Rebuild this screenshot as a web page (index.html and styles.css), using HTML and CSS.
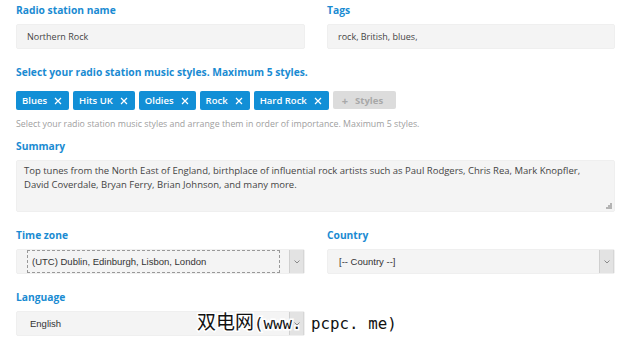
FILE: index.html
```html
<!DOCTYPE html>
<html lang="en">
<head>
    <meta charset="UTF-8">
    <meta name="viewport" content="width=device-width, initial-scale=1.0">
    <title>Radio station details</title>
    <link rel="stylesheet" href="styles.css">
</head>
<body>
    <form class="station-form" id="station-form">
        <div class="form-row">
            <div class="form-group">
                <label for="station-name">Radio station name</label>
                <input type="text" id="station-name" class="text-input" value="Northern Rock">
            </div>
            <div class="form-group">
                <label for="station-tags">Tags</label>
                <input type="text" id="station-tags" class="text-input" value="rock, British, blues,">
            </div>
        </div>

        <div class="form-group form-group-help">
            <label>Select your radio station music styles. Maximum 5 styles.</label>
            <div class="chips">
                <span class="chip">Blues <svg class="chip-x" viewBox="0 0 8 8"><path d="M1 1L7 7M7 1L1 7"/></svg></span>
                <span class="chip">Hits UK <svg class="chip-x" viewBox="0 0 8 8"><path d="M1 1L7 7M7 1L1 7"/></svg></span>
                <span class="chip">Oldies <svg class="chip-x" viewBox="0 0 8 8"><path d="M1 1L7 7M7 1L1 7"/></svg></span>
                <span class="chip">Rock <svg class="chip-x" viewBox="0 0 8 8"><path d="M1 1L7 7M7 1L1 7"/></svg></span>
                <span class="chip">Hard Rock <svg class="chip-x" viewBox="0 0 8 8"><path d="M1 1L7 7M7 1L1 7"/></svg></span>
                <button type="button" class="add-style" disabled><span class="plus">+</span>Styles</button>
            </div>
            <p class="help">Select your radio station music styles and arrange them in order of importance. Maximum 5 styles.</p>
        </div>

        <div class="form-group">
            <label for="station-summary">Summary</label>
            <div class="area-wrap">
                <textarea id="station-summary" class="text-area">Top tunes from the North East of England, birthplace of influential rock artists such as Paul Rodgers, Chris Rea, Mark Knopfler, David Coverdale, Bryan Ferry, Brian Johnson, and many more.</textarea>
                <span class="grip"></span>
            </div>
        </div>

        <div class="form-row">
            <div class="form-group">
                <label>Time zone</label>
                <div class="select">
                    <span class="select-value focused">(UTC) Dublin, Edinburgh, Lisbon, London</span>
                    <span class="select-arrow"><svg viewBox="0 0 6 4"><path d="M0.5 0.5L3 3L5.5 0.5"/></svg></span>
                </div>
            </div>
            <div class="form-group">
                <label>Country</label>
                <div class="select">
                    <span class="select-value country">[-- Country --]</span>
                    <span class="select-arrow"><svg viewBox="0 0 6 4"><path d="M0.5 0.5L3 3L5.5 0.5"/></svg></span>
                </div>
            </div>
        </div>

        <div class="form-row">
            <div class="form-group">
                <label>Language</label>
                <div class="select">
                    <span class="select-value lang">English</span>
                    <span class="select-arrow"><svg viewBox="0 0 6 4"><path d="M0.5 0.5L3 3L5.5 0.5"/></svg></span>
                </div>
            </div>
        </div>
    </form>

    <div class="watermark"><span class="wm-cjk">双电网</span><span class="wm-latin">(www. pcpc. me)</span></div>
</body>
</html>
```

FILE: styles.css
```css
body {
    font-family: "Open Sans", Arial, sans-serif;
    background-color: #ffffff;
    margin: 0;
    padding: 3px 16px 0 16px;
    color: #444;
    position: relative;
    height: 348px;
    box-sizing: border-box;
    overflow: hidden;
}

.station-form {
    width: 599px;
}

.form-row {
    display: grid;
    grid-template-columns: 289px 288px;
    column-gap: 22px;
}

.form-group {
    margin-bottom: 16px;
}

.form-group-help {
    margin-bottom: 9px;
}

label {
    display: block;
    font-size: 10.25px;
    font-weight: bold;
    line-height: 14px;
    color: #1a8bd2;
    margin-bottom: 7px;
}

.text-input {
    display: block;
    width: 100%;
    height: 25px;
    box-sizing: border-box;
    padding: 0 10px;
    border: 1px solid #efefef;
    border-radius: 2px;
    background-color: #f4f4f4;
    font-family: inherit;
    font-size: 9px;
    color: #444;
    outline: none;
}

.chips {
    display: flex;
    align-items: flex-start;
    gap: 4px;
    padding-top: 5px;
}

.chip {
    display: flex;
    align-items: center;
    height: 19px;
    padding: 0 7px 0 6px;
    background-color: #128fd6;
    border-radius: 2px;
    color: #fff;
    font-size: 9.5px;
    font-weight: 600;
}

.chip-x {
    width: 8px;
    height: 8px;
    margin-left: 7px;
    stroke: #fff;
    stroke-width: 1.2;
    fill: none;
}

.add-style {
    display: flex;
    align-items: center;
    height: 18px;
    width: 63px;
    border: none;
    border-radius: 2px;
    background-color: #dcdcdc;
    color: #a8a8a8;
    font-family: inherit;
    font-size: 9.5px;
    font-weight: 700;
    padding: 0 0 0 9px;
}

.plus {
    font-size: 11px;
    margin-right: 7px;
}

.help {
    margin: 8px 0 0 0;
    font-size: 8.8px;
    line-height: 12px;
    color: #a0a0a0;
}

.area-wrap {
    position: relative;
}

.text-area {
    display: block;
    width: 100%;
    height: 52px;
    box-sizing: border-box;
    padding: 3px 7px;
    border: 1px solid #efefef;
    border-radius: 2px;
    background-color: #f4f4f4;
    font-family: inherit;
    font-size: 9.5px;
    line-height: 14px;
    color: #444;
    resize: none;
    outline: none;
}

.grip {
    position: absolute;
    right: 3px;
    bottom: 3px;
    width: 6px;
    height: 6px;
    background:
        linear-gradient(#999, #999) 4px 0 / 2px 2px no-repeat,
        linear-gradient(#999, #999) 2px 2px / 2px 2px no-repeat,
        linear-gradient(#999, #999) 4px 2px / 2px 2px no-repeat,
        linear-gradient(#999, #999) 0 4px / 2px 2px no-repeat,
        linear-gradient(#999, #999) 2px 4px / 2px 2px no-repeat,
        linear-gradient(#999, #999) 4px 4px / 2px 2px no-repeat;
    opacity: 0.7;
}

.select {
    display: flex;
    height: 25px;
    box-sizing: border-box;
    border: 1px solid #efefef;
    border-radius: 2px;
    background-color: #f4f4f4;
}

.select-value {
    flex: 1;
    display: flex;
    align-items: center;
    font-size: 9.5px;
    color: #333;
    font-family: "Liberation Sans", Arial, sans-serif;
}

.select-value.focused {
    margin: 0 9px 0 10px;
    padding-left: 4px;
    border: 1px dashed #999;
}

.select-value.country {
    padding-left: 11px;
}

.select-value.lang {
    padding-left: 13px;
}

.select-arrow {
    width: 13px;
    display: flex;
    align-items: center;
    justify-content: center;
    background-color: #e3e3e3;
    border-left: 1px solid #cfcfcf;
    border-right: 1px solid #d6d6d6;
}

.select-arrow svg {
    width: 6px;
    height: 4px;
    stroke: #888;
    stroke-width: 1;
    fill: none;
}

.watermark {
    position: absolute;
    left: 197px;
    top: 309px;
    color: #111;
    white-space: nowrap;
    paint-order: stroke fill;
    -webkit-text-stroke: 3px #fff;
    line-height: 24px;
}

.wm-cjk {
    font-family: "Noto Sans CJK SC", sans-serif;
    font-size: 19px;
}

.wm-latin {
    font-family: "DejaVu Sans Mono", monospace;
    font-size: 15.8px;
}
```
